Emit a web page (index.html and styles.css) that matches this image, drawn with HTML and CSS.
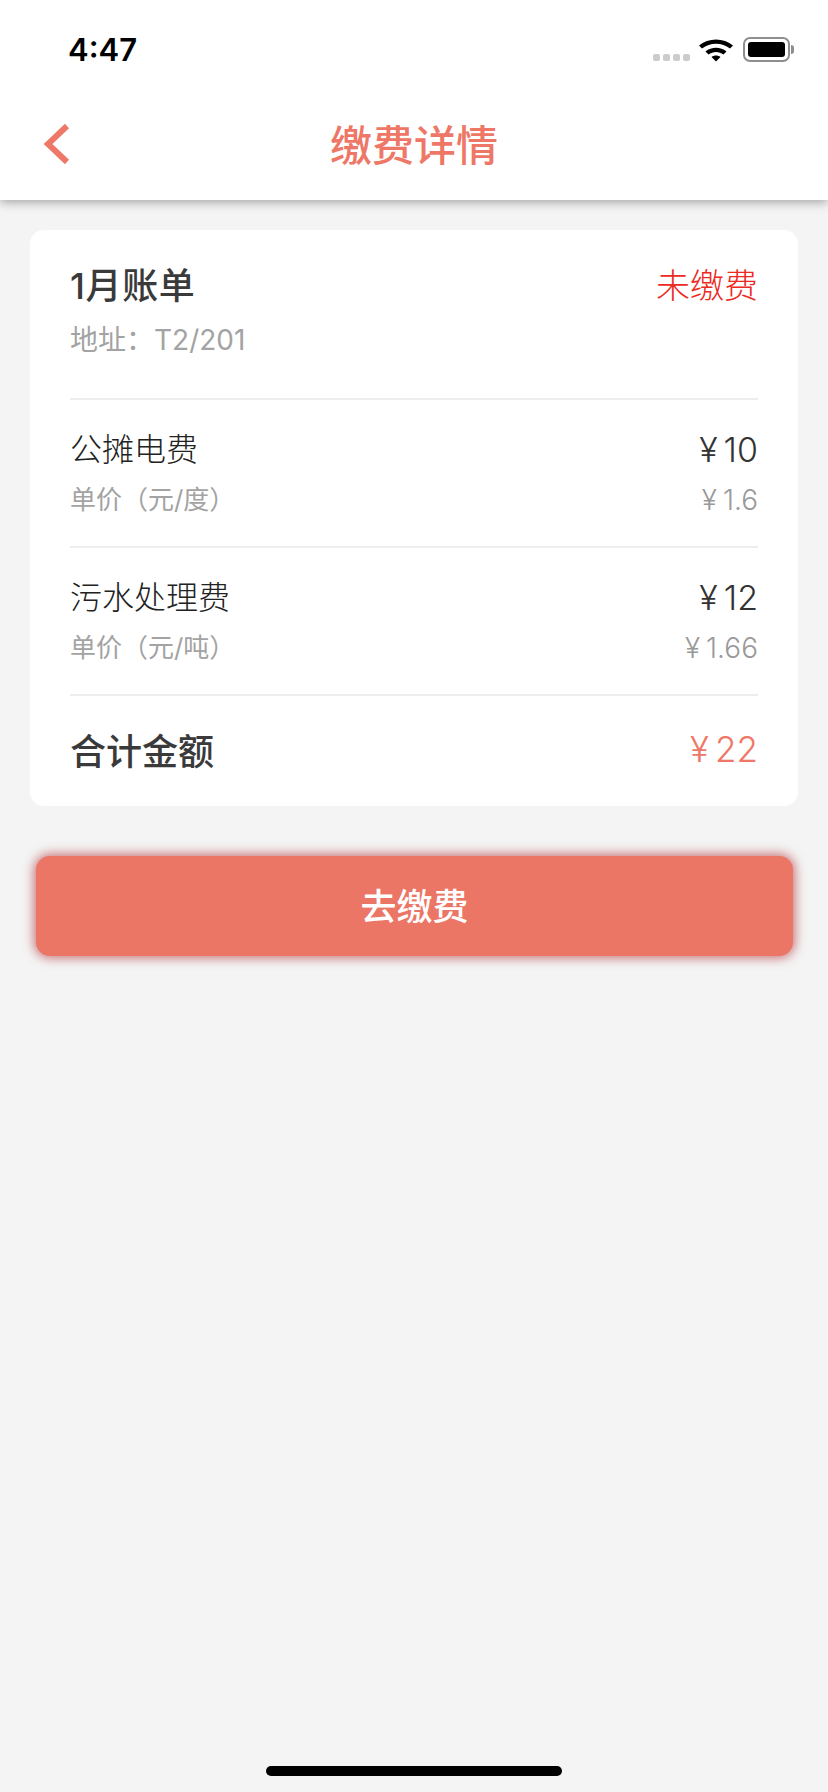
FILE: index.html
```html
<!DOCTYPE html>
<html lang="zh">
<head>
    <meta charset="UTF-8">
    <meta name="viewport" content="width=device-width, initial-scale=1.0">
    <title>缴费详情</title>
    <link rel="stylesheet" href="styles.css">
</head>
<body>

<div class="page">
    <header class="top">
        <div class="status-bar">
            <span class="time">4:47</span>
            <div class="status-icons">
                <div class="signal"><i></i><i></i><i></i><i></i></div>
                <svg class="wifi" width="34" height="25" viewBox="0 0 34 25">
                    <path d="M0 8.5C9 .5 25 .5 34 8.5L31 11.5C23 5 11 5 3 11.5Z"/>
                    <path d="M6.5 14.5C12.5 9.5 21.5 9.5 27.5 14.5L24.5 17.5C20 14 14 14 9.5 17.5Z"/>
                    <path d="M12.5 20C15 18 19 18 21.5 20L17 24.5Z"/>
                </svg>
                <div class="battery"><div class="battery-fill"></div></div>
                <div class="battery-nub"></div>
            </div>
        </div>
        <nav class="nav-bar">
            <svg class="back" width="27" height="40" viewBox="0 0 27 40">
                <path d="M24 2L5 20L24 38"/>
            </svg>
            <h1>缴费详情</h1>
        </nav>
    </header>

    <main class="content">
        <section class="card">
            <div class="bill-head">
                <div class="row">
                    <span class="bill-title">1月账单</span>
                    <span class="bill-state">未缴费</span>
                </div>
                <div class="sub-address">地址：T2/201</div>
            </div>
            <div class="fee">
                <div class="row">
                    <span class="fee-name">公摊电费</span>
                    <span class="fee-price">¥<b>10</b></span>
                </div>
                <div class="row sub">
                    <span>单价（元/度）</span>
                    <span class="sub-price">¥<b>1.6</b></span>
                </div>
            </div>
            <div class="fee">
                <div class="row">
                    <span class="fee-name">污水处理费</span>
                    <span class="fee-price">¥<b>12</b></span>
                </div>
                <div class="row sub">
                    <span>单价（元/吨）</span>
                    <span class="sub-price">¥<b>1.66</b></span>
                </div>
            </div>
            <div class="total row">
                <span class="total-label">合计金额</span>
                <span class="total-price">¥<b>22</b></span>
            </div>
        </section>
        <button class="pay-button">去缴费</button>
    </main>

    <div class="home-bar"></div>
</div>

</body>
</html>
```

FILE: styles.css
```css
* {
    box-sizing: border-box;
}

html,
body {
    margin: 0;
    padding: 0;
}

body {
    font-family: Inter, "Noto Sans CJK SC", sans-serif;
    background-color: #f4f4f4;
    color: #333;
}

.page {
    display: flex;
    flex-direction: column;
    height: 1792px;
    overflow: hidden;
}

/* Header */
.top {
    height: 200px;
    background-color: #fff;
    box-shadow: 0 2px 10px rgba(0, 0, 0, 0.35);
}

.status-bar {
    height: 88px;
    padding: 34px 34px 0 68px;
    display: flex;
    justify-content: space-between;
    align-items: flex-start;
}

.time {
    font-size: 31px;
    line-height: 32px;
    font-weight: 600;
    color: #000;
}

.status-icons {
    display: flex;
    align-items: flex-start;
    padding-top: 3px;
}

.signal {
    display: flex;
    gap: 3px;
    margin-top: 17px;
    margin-right: 9px;
}

.signal i {
    display: block;
    width: 7px;
    height: 7px;
    border-radius: 2px;
    background-color: #ccc;
}

.wifi {
    display: block;
    fill: #000;
    margin-right: 10px;
}

.battery {
    width: 47px;
    height: 25px;
    padding: 3px;
    border: 2px solid #8e8e8e;
    border-radius: 7px;
}

.battery-fill {
    height: 100%;
    border-radius: 3px;
    background-color: #000;
}

.battery-nub {
    width: 3px;
    height: 9px;
    margin: 8px 0 0 1px;
    border-radius: 0 3px 3px 0;
    background-color: #8e8e8e;
}

.nav-bar {
    position: relative;
    height: 112px;
    padding-bottom: 4px;
    display: flex;
    align-items: center;
    justify-content: center;
}

.nav-bar h1 {
    margin: 0;
    font-size: 42px;
    font-weight: 500;
    color: #ee7767;
}

.back {
    position: absolute;
    left: 43px;
    top: 36px;
    fill: none;
    stroke: #ee7767;
    stroke-width: 6;
}

/* Bill card */
.content {
    padding: 30px 30px 0;
}

.card {
    padding: 0 40px;
    border-radius: 14px;
    background-color: #fff;
}

.row {
    display: flex;
    justify-content: space-between;
    align-items: center;
}

.bill-head {
    height: 168px;
    padding-top: 32px;
}

.bill-title {
    font-size: 36px;
    line-height: 48px;
    font-weight: 500;
    letter-spacing: 0.6px;
    color: #3a3a3a;
}

.bill-state {
    font-size: 34px;
    line-height: 48px;
    font-weight: 300;
    color: #ec2a1f;
}

.sub-address {
    margin-top: 10px;
    font-size: 28px;
    line-height: 40px;
    color: #a3a3a3;
}

.fee {
    height: 148px;
    padding-top: 27px;
    border-top: 2px solid #eee;
}

.fee-name {
    font-size: 32px;
    line-height: 46px;
    font-weight: 300;
    color: #222;
}

.fee-price {
    font-size: 34px;
    line-height: 46px;
    font-weight: 300;
}

.fee-price b,
.sub-price b,
.total-price b {
    font-weight: inherit;
    margin-left: 6px;
}

.sub {
    margin-top: 8px;
    font-size: 26px;
    line-height: 38px;
    color: #a3a3a3;
}

.sub-price {
    font-size: 28px;
    font-weight: 300;
    color: #999;
}

.total {
    height: 112px;
    padding-bottom: 4px;
    border-top: 2px solid #eee;
}

.total-label {
    font-size: 36px;
    font-weight: 500;
    color: #3a3a3a;
}

.total-price {
    font-size: 35px;
    font-weight: 300;
    color: #ee7767;
}

/* Pay button */
.pay-button {
    display: block;
    width: 757px;
    height: 100px;
    margin: 50px 0 0 6px;
    padding: 0 0 4px;
    border: none;
    border-radius: 14px;
    background-color: #ec7666;
    box-shadow: 0 0 11px 2px rgba(190, 80, 85, 0.8);
    color: #fff;
    font-family: inherit;
    font-size: 36px;
    font-weight: 500;
}

.home-bar {
    width: 296px;
    height: 10px;
    margin: auto auto 16px;
    border-radius: 5px;
    background-color: #000;
}
```
